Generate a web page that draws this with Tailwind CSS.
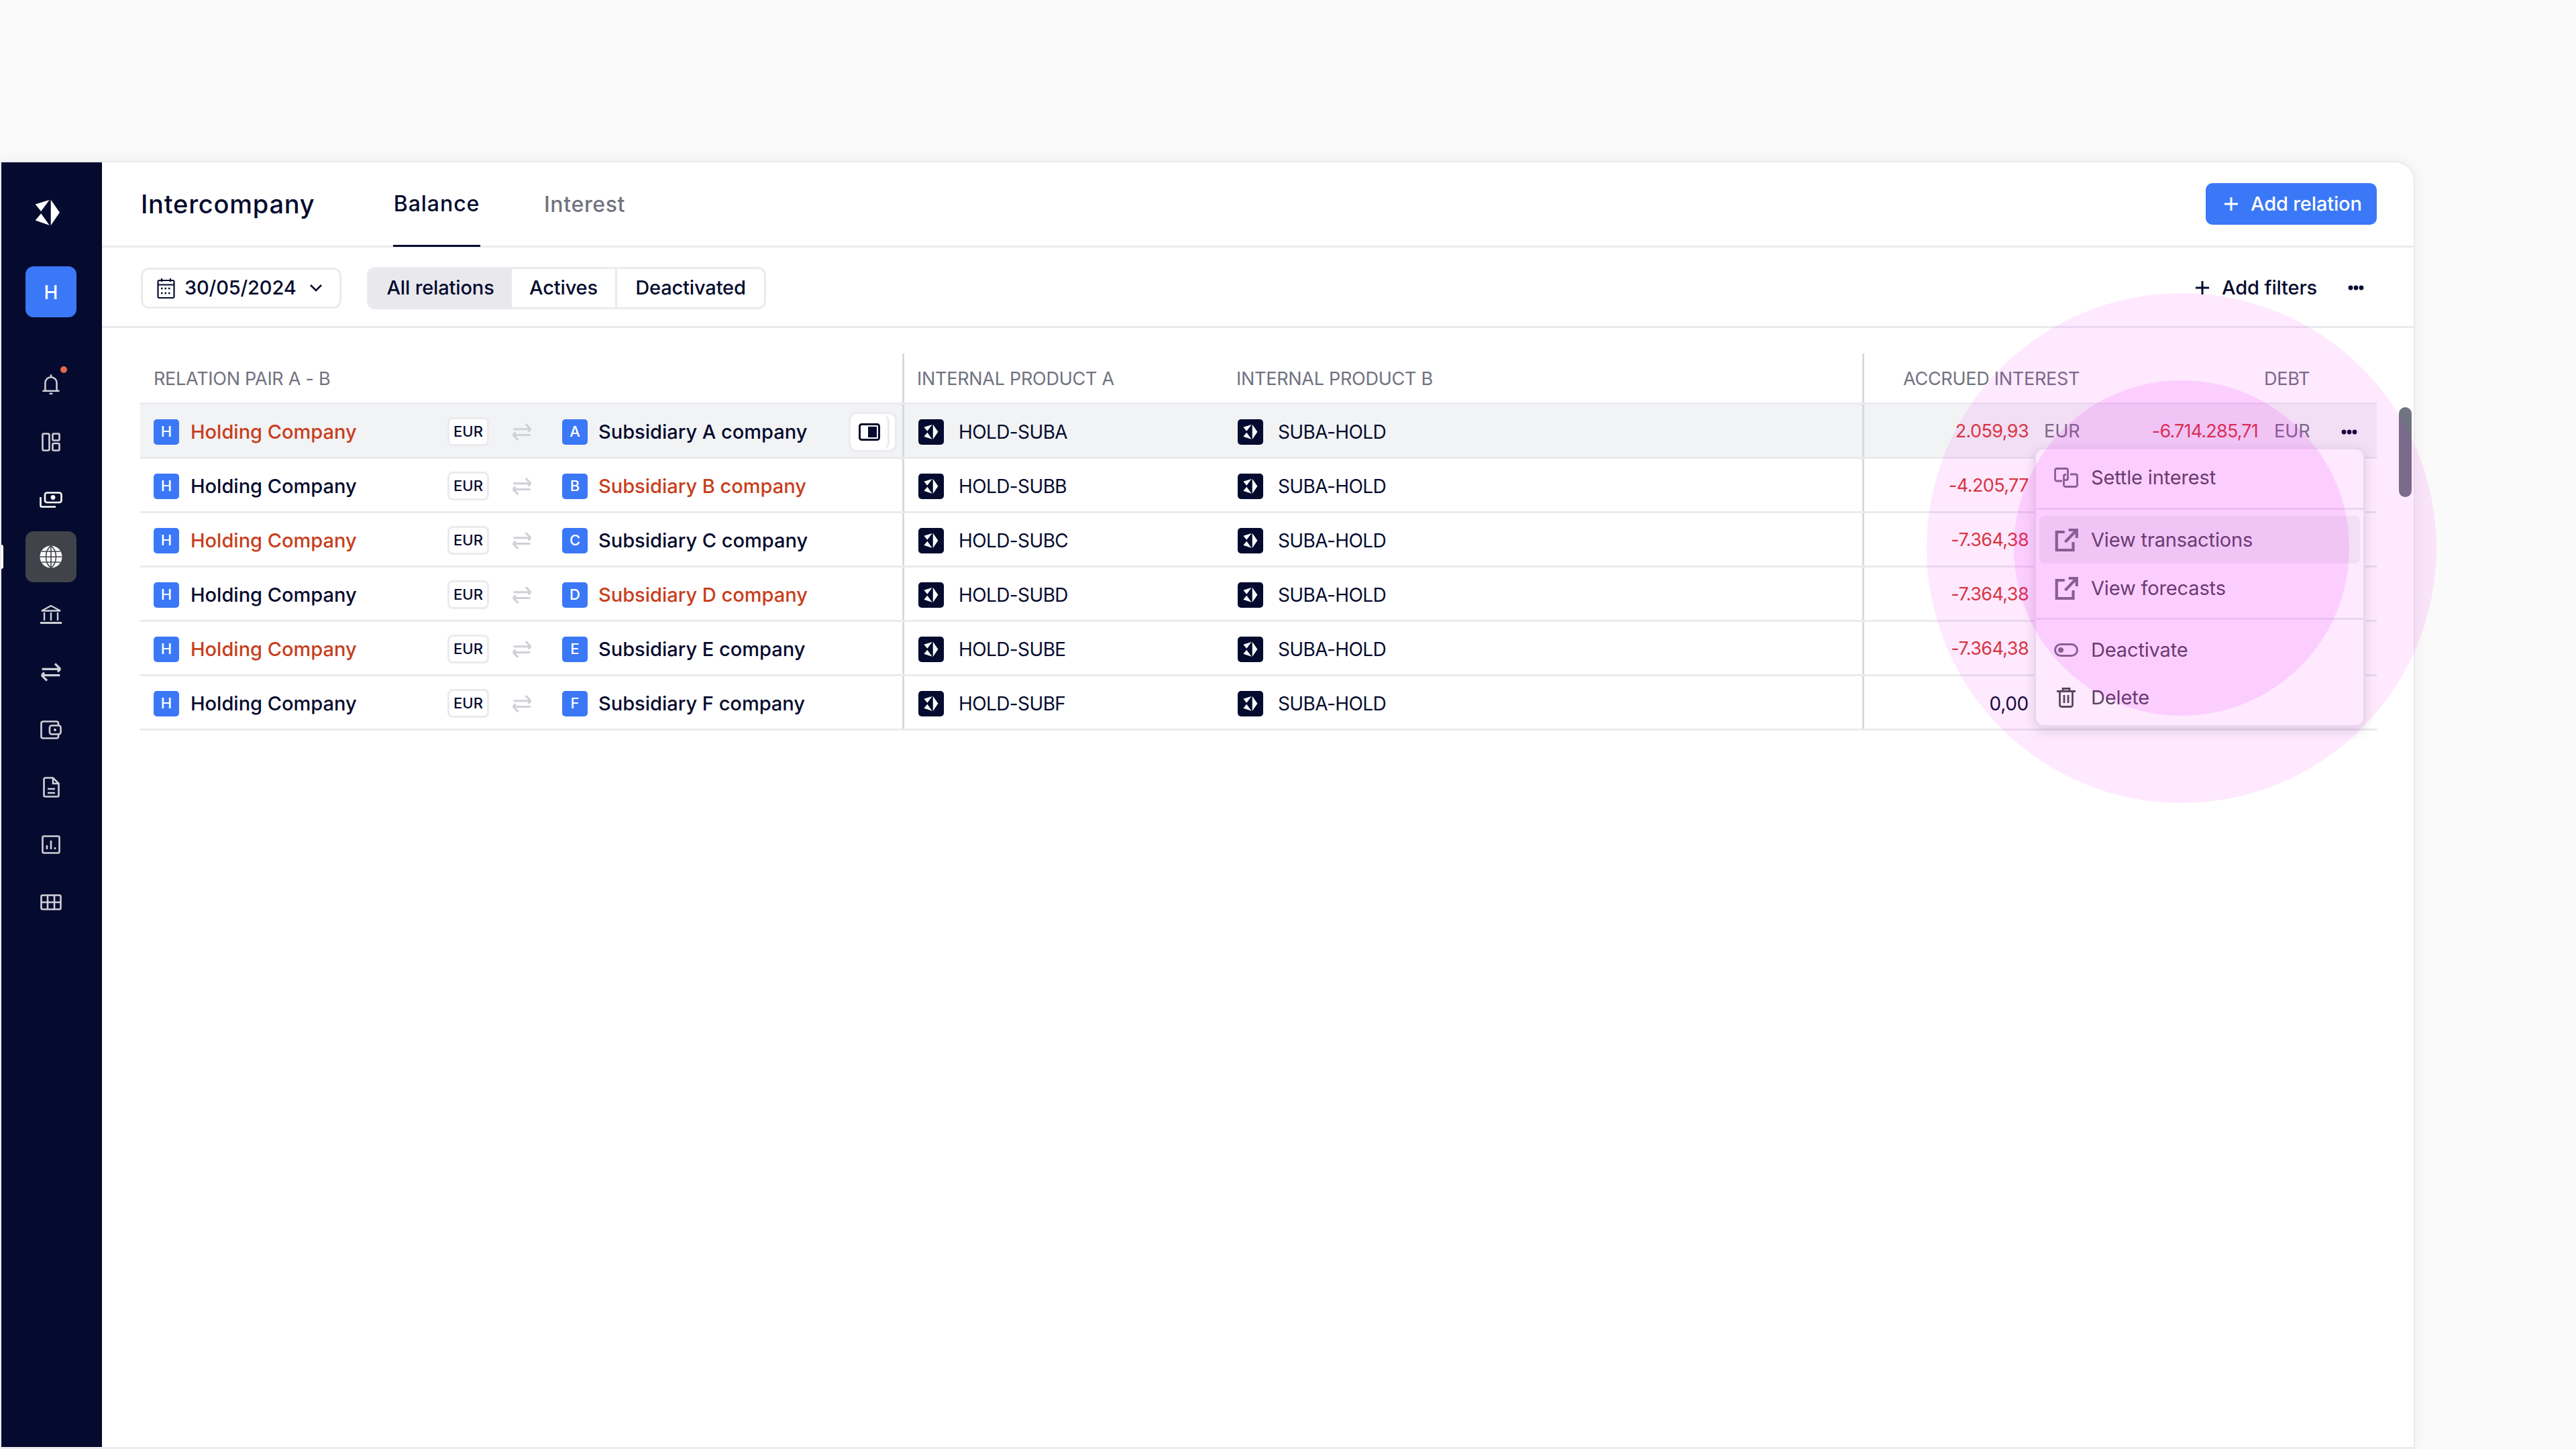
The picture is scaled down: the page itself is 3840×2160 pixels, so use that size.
<!DOCTYPE html>
<html lang="en">
<head>
<meta charset="UTF-8">
<title>Intercompany</title>
<script src="https://cdn.jsdelivr.net/npm/@tailwindcss/browser@4"></script>
</head>
<body>
<svg class="hidden" width="0" height="0">
  <symbol id="logo" viewBox="36 20 112 118"><path fill="currentColor" d="M106 22 145 78 106 135ZM38 42 100 23 63 73ZM38 113 63 83 100 134Z"/></symbol>
  <symbol id="swap" viewBox="0 0 24 24"><path fill="none" stroke="currentColor" stroke-width="2.400" d="M2 8.500h20M22.500 8.500 16.500 2.500M22.500 8.500l-3 3M2 15.500h20M1.500 15.500l6 6M1.500 15.500l3-3"/></symbol>
  <symbol id="dots" viewBox="0 0 24 8"><circle cx="4" cy="4" r="3.400" fill="currentColor"/><circle cx="12" cy="4" r="3.400" fill="currentColor"/><circle cx="20" cy="4" r="3.400" fill="currentColor"/></symbol>
  <symbol id="plus" viewBox="0 0 24 24"><path fill="none" stroke="currentColor" stroke-width="3" d="M12 2v20M2 12h20"/></symbol>
  <symbol id="ext" viewBox="0 0 24 24"><path fill="none" stroke="currentColor" stroke-width="2.800" d="M10.500 4H2.500v18h16.500v-8M11 14 22 2.500M14.500 2h8v8"/></symbol>
</svg>

<div class="relative w-[3840px] h-[2160px] overflow-hidden bg-[#fafafa] pt-[240px] [font-family:Inter,sans-serif] text-[#050b2e]">
  <!-- app window -->
  <div class="relative flex w-[3600px] h-[1920px] overflow-hidden rounded-tr-[30px] border-x-2 border-t-2 border-b-[3px] border-[#ebebef] bg-white shadow-[0_0_24px_rgba(0,0,0,0.06)]">

    <!-- sidebar -->
    <aside class="relative w-[150px] shrink-0 bg-[#050b2e] pl-[36px] pt-[55px]">
      <svg class="ml-[14px] w-[38px] h-[40px] text-white"><use href="#logo"/></svg>
      <div class="mt-[60px] flex w-[76px] h-[76px] items-center justify-center rounded-xl bg-[#3b78f7] pt-[2px] text-[28px] font-medium text-white">H</div>
      <nav class="mt-[62px] flex flex-col gap-[9.8px] text-[#cfd0d8]">
        <div class="relative flex w-[76px] h-[76px] items-center justify-center">
          <svg class="w-[28px] h-[32px]" viewBox="0 0 24 28" fill="none" stroke="currentColor" stroke-width="2.200"><path d="M12 1v3M4.500 22V12a7.500 7.500 0 0 1 15 0v10M1 22.500h22M10 26h4"/></svg>
          <span class="absolute right-[14px] top-[11px] w-[10px] h-[10px] rounded-full bg-[#e5694d]"></span>
        </div>
        <div class="flex w-[76px] h-[76px] items-center justify-center">
          <svg class="w-[28px] h-[28px]" viewBox="0 0 28 28" fill="none" stroke="currentColor" stroke-width="2.600"><rect x="1.500" y="1.500" width="10" height="25" rx="2"/><rect x="16.500" y="1.500" width="10" height="10" rx="1.500"/><rect x="16.500" y="16" width="10" height="10.500" rx="1.500"/></svg>
        </div>
        <div class="flex w-[76px] h-[76px] items-center justify-center text-white">
          <svg class="w-[34px] h-[24px]" viewBox="0 0 34 24" fill="none" stroke="currentColor" stroke-width="2.600"><rect x="8" y="1.500" width="24.500" height="14.500" rx="3"/><path d="M1.500 8v12.500a2 2 0 0 0 2 2H24"/><circle cx="20" cy="8.500" r="3.400" fill="currentColor" stroke="none"/></svg>
        </div>
        <div class="flex w-[76px] h-[76px] items-center justify-center rounded-xl bg-[#404349]">
          <svg class="w-[34px] h-[34px]" viewBox="0 0 34 34"><circle cx="17" cy="17" r="16.500" fill="#fff"/><path fill="none" stroke="#404349" stroke-width="1.600" d="M17 .5v33M.5 17h33M3 9h28M3 25h28M17 .5C7 8 7 26 17 33.500M17 .5c10 7.500 10 25.500 0 33"/></svg>
        </div>
        <div class="flex w-[76px] h-[76px] items-center justify-center">
          <svg class="w-[32px] h-[30px]" viewBox="0 0 32 30" fill="none" stroke="currentColor" stroke-width="2.400"><path d="M2 9.500 16 2l14 7.500ZM6 12v12M16 12v12M26 12v12"/><path d="M0 27.500h32" stroke-width="3"/></svg>
        </div>
        <div class="flex w-[76px] h-[76px] items-center justify-center">
          <svg class="w-[32px] h-[32px]"><use href="#swap"/></svg>
        </div>
        <div class="flex w-[76px] h-[76px] items-center justify-center">
          <svg class="w-[32px] h-[28px]" viewBox="0 0 32 28" fill="none" stroke="currentColor" stroke-width="2.600"><path d="M27 7V4a2.500 2.500 0 0 0-2.500-2.500H4A2.500 2.500 0 0 0 1.500 4v20A2.500 2.500 0 0 0 4 26.500h20.500A2.500 2.500 0 0 0 27 24v-3"/><rect x="14" y="7.500" width="16.500" height="13" rx="3"/><circle cx="22" cy="14" r="2" fill="currentColor" stroke="none"/></svg>
        </div>
        <div class="flex w-[76px] h-[76px] items-center justify-center">
          <svg class="w-[25px] h-[31px]" viewBox="0 0 25 31" fill="none" stroke="currentColor" stroke-width="2.600"><path d="M3.500 1.500H15L23.500 10v17.500a2 2 0 0 1-2 2h-18a2 2 0 0 1-2-2v-24a2 2 0 0 1 2-2ZM15 1.500V10h8.500M7 18h11M7 24h11"/></svg>
        </div>
        <div class="flex w-[76px] h-[76px] items-center justify-center">
          <svg class="w-[28px] h-[28px]" viewBox="0 0 28 28" fill="none" stroke="currentColor" stroke-width="2.600"><rect x="1.500" y="1.500" width="25" height="25" rx="2"/><path d="M8 21v-6M14 21V8M20 21v-3"/></svg>
        </div>
        <div class="flex w-[76px] h-[76px] items-center justify-center">
          <svg class="w-[32px] h-[24px]" viewBox="0 0 32 24" fill="none" stroke="currentColor" stroke-width="2.600"><rect x="1.500" y="1.500" width="29" height="21" rx="2"/><path d="M1.500 12h29M11 1.500v21M21 1.500v21"/></svg>
        </div>
      </nav>
    </aside>
    <span class="absolute left-0 top-[570px] w-[3px] h-[36px] rounded-r-sm bg-white"></span>

    <!-- main -->
    <main class="flex-1 min-w-0">
      <header class="flex h-[127px] items-center border-b-[3px] border-[#ebebef] pl-[58px] pr-[55px]">
        <h1 class="w-[376px] text-[38px] font-medium tracking-[0.02em]">Intercompany</h1>
        <div class="flex h-full items-center">
          <span class="flex h-[127px] w-[130px] items-center justify-center border-b-[3px] border-[#050b2e] pt-[2px] text-[32px] font-medium tracking-[0.03em]">Balance</span>
          <span class="ml-[95px] pt-[2px] text-[32px] font-medium tracking-[0.02em] text-[#71727f]">Interest</span>
        </div>
        <button class="ml-auto flex h-[62px] w-[255px] items-center rounded-[10px] bg-[#3b78f7] pl-[26px] text-[29px] font-medium tracking-[-0.005em] text-white">
          <svg class="mr-[17px] w-[24px] h-[24px]"><use href="#plus"/></svg>Add relation
        </button>
      </header>

      <div class="flex h-[120px] items-center border-b-[3px] border-[#ebebef] pl-[58px] pr-[74px] pt-[3px] text-[29px] font-medium tracking-[-0.005em]">
        <button class="flex h-[61px] w-[299px] items-center rounded-xl border-[3px] border-[#ebebef] pl-[21px]">
          <svg class="mr-[14px] w-[27px] h-[31px]" viewBox="0 0 27 31" fill="none" stroke="currentColor" stroke-width="2.200"><path d="M7 1v5M20 1v5M2 10.500h23"/><rect x="1.500" y="4" width="24" height="26" rx="2"/><path stroke-dasharray="2.500 3" d="M6 16h16M6 23h16" stroke-width="2.500"/></svg>
          30/05/2024
          <svg class="ml-[19px] w-[20px] h-[12px]" viewBox="0 0 20 12" fill="none" stroke="currentColor" stroke-width="2.500"><path d="m2 2 8 8 8-8"/></svg>
        </button>
        <div class="ml-[38px] flex h-[63px] w-[595px] overflow-hidden rounded-xl border-[3px] border-[#ebebef]">
          <span class="flex w-[213px] items-center justify-center bg-[#e9e9ed]">All relations</span>
          <span class="flex w-[157px] items-center justify-center border-r-[3px] border-[#ebebef]">Actives</span>
          <span class="flex flex-1 items-center justify-center">Deactivated</span>
        </div>
        <button class="ml-auto flex items-center">
          <svg class="mr-[17px] w-[24px] h-[24px]"><use href="#plus"/></svg>Add filters
        </button>
        <svg class="ml-[46px] w-[24px] h-[8px]"><use href="#dots"/></svg>
      </div>

      <!-- table -->
      <section class="ml-[57px] mt-[38px] w-[3334px] text-[29px] font-medium">
        <div class="flex h-[76px] border-b-[3px] border-[#ebebef] text-[27px] font-normal tracking-[-0.01em] whitespace-nowrap text-[#71727f]">
          <div class="flex w-[1139px] items-center border-r-[3px] border-[#d8d8de] pl-[20px] pt-[4px]">RELATION PAIR A - B</div>
          <div class="flex w-[1431px] items-center border-r-[3px] border-[#d8d8de] pl-[19px] pt-[4px]"><span class="w-[476px]">INTERNAL PRODUCT A</span><span>INTERNAL PRODUCT B</span></div>
          <div class="flex flex-1 items-center pt-[4px]"><span class="w-[321px] pl-[58px]">ACCRUED INTEREST</span><span class="ml-[275px]">DEBT</span></div>
        </div>
        <div id="rows"></div>
      </section>
    </main>

    <!-- scrollbar thumb -->
    <span class="absolute right-[3px] top-[365px] w-[19px] h-[134px] rounded-full bg-[#6f7480]"></span>
  </div>

  <!-- row action menu -->
  <div class="absolute left-[3032px] top-[667px] w-[494px] h-[417px] rounded-[14px] border-[3px] border-[#ebebef] bg-white text-[29px] text-[#4b4b51] tracking-[-0.005em] shadow-[0_6px_18px_rgba(0,0,0,0.12)]">
    <div class="flex h-[90px] items-center border-b-[3px] border-[#ebebef] pb-[3px] pl-[27px]">
      <svg class="mr-[19px] w-[36px] h-[30px] text-[#72757d]" viewBox="0 0 36 30" fill="none" stroke="currentColor" stroke-width="2.800"><path d="M12 20H4a2.500 2.500 0 0 1-2.500-2.500V4A2.500 2.500 0 0 1 4 1.500h14A2.500 2.500 0 0 1 20.500 4v12a2.500 2.500 0 0 1-2.500 2.500h-2"/><path d="M24 10h8a2.500 2.500 0 0 1 2.500 2.500V26a2.500 2.500 0 0 1-2.500 2.500H17a2.500 2.500 0 0 1-2.500-2.500V13a2.500 2.500 0 0 1 2.500-2.500h1"/></svg>
      Settle interest
    </div>
    <div class="flex h-[164px] flex-col border-b-[3px] border-[#ebebef] px-[5px] pt-[9px]">
      <div class="flex h-[71px] items-center rounded-lg bg-[#f2f3f5] pl-[22px]">
        <svg class="mr-[19px] w-[36px] h-[36px] text-[#72757d]"><use href="#ext"/></svg>View transactions
      </div>
      <div class="flex h-[71px] items-center pl-[22px] pt-[3px]">
        <svg class="mr-[19px] w-[36px] h-[36px] text-[#72757d]"><use href="#ext"/></svg>View forecasts
      </div>
    </div>
    <div class="flex h-[86px] items-center pl-[27px] pt-[3px]">
      <svg class="mr-[19px] w-[36px] h-[20px] text-[#72757d]" viewBox="0 0 36 20"><rect x="1.500" y="1.500" width="33" height="17" rx="8.500" fill="none" stroke="currentColor" stroke-width="3"/><circle cx="10" cy="10" r="4" fill="currentColor"/></svg>
      Deactivate
    </div>
    <div class="flex h-[60px] items-center pl-[31px]">
      <svg class="mr-[23px] w-[28px] h-[30px] text-[#4b4b51]" viewBox="0 0 28 30" fill="none" stroke="currentColor" stroke-width="2.800"><path d="M0 5.500h28M9 5V1.500h10V5M4.500 6v20a2.500 2.500 0 0 0 2.500 2.500h14a2.500 2.500 0 0 0 2.500-2.500V6M11 11v12M17 11v12"/></svg>
      Delete
    </div>
  </div>

  <!-- highlight circles -->
  <span class="pointer-events-none absolute left-[2872px] top-[437px] w-[760px] h-[760px] rounded-full bg-[#f000ff]/[0.086]"></span>
  <span class="pointer-events-none absolute left-[3002px] top-[567px] w-[500px] h-[500px] rounded-full bg-[#f000ff]/[0.112]"></span>
</div>

<script>
  const RED = "text-[#c83e1c]";
  const data = [
    { sub: "A", holdRed: true, value: "2.059,93" },
    { sub: "B", holdRed: false, value: "-4.205,77" },
    { sub: "C", holdRed: true, value: "-7.364,38" },
    { sub: "D", holdRed: false, value: "-7.364,38" },
    { sub: "E", holdRed: true, value: "-7.364,38" },
    { sub: "F", holdRed: false, value: "0,00" },
  ];

  const productIcon = `<span class="flex w-[38px] h-[38px] items-center justify-center rounded-[5px] bg-[#050b2e] text-white"><svg class="w-[22px] h-[24px]"><use href="#logo"/></svg></span>`;

  document.querySelector("#rows").innerHTML = data.map((r, i) => {
    const subRed = !r.holdRed && r.sub !== "F";
    const zero = r.value === "0,00";
    return `
    <div class="flex h-[81px] border-b-[3px] border-[#ebebef] ${i === 0 ? "bg-[#f2f3f5]" : ""}">
      <div class="flex w-[1139px] items-center border-r-[3px] border-[#d8d8de] pl-[20px] pt-[3px]">
        <span class="flex w-[38px] h-[38px] items-center justify-center rounded-[5px] bg-[#3b78f7] text-[22px] text-white">H</span>
        <span class="ml-[17px] w-[383px] ${r.holdRed ? RED : ""}">Holding Company</span>
        <span class="flex w-[62px] h-[43px] items-center justify-center rounded-lg border-[3px] border-[#ebebef] bg-white text-[22px]">EUR</span>
        <svg class="ml-[34px] w-[30px] h-[30px] text-[#d0d0d8]"><use href="#swap"/></svg>
        <span class="ml-[45px] flex w-[38px] h-[38px] items-center justify-center rounded-[5px] bg-[#3b78f7] text-[22px] text-white">${r.sub}</span>
        <span class="ml-[16px] ${subRed ? RED : ""}">Subsidiary ${r.sub} company</span>
        ${i === 0 ? `<span class="ml-auto mr-[8px] flex w-[72px] h-[60px] rounded-xl border-[3px] border-[#ebebef] bg-white"><span class="flex w-[58px] items-center justify-center rounded-xl border-r-[3px] border-[#ebebef]"><svg class="w-[32px] h-[26px]" viewBox="0 0 32 26"><rect x="1.500" y="1.500" width="29" height="23" rx="3" fill="none" stroke="currentColor" stroke-width="3"/><rect x="14" y="5" width="13" height="16" fill="currentColor"/></svg></span></span>` : ""}
      </div>
      <div class="flex w-[1431px] items-center border-r-[3px] border-[#d8d8de] pl-[21px] pt-[3px] text-[28px] font-normal tracking-[-0.022em]">
        <div class="flex w-[476px] items-center">${productIcon}<span class="ml-[22px]">HOLD-SUB${r.sub}</span></div>
        <div class="flex items-center">${productIcon}<span class="ml-[22px]">SUBA-HOLD</span></div>
      </div>
      <div class="flex flex-1 items-center pt-[3px] text-[27px] font-normal">
        <span class="w-[245px] text-right ${zero ? "text-[28px] tracking-[-0.01em]" : "tracking-[-0.022em] text-[#d63a2f]"}">${r.value}</span>
        ${i === 0 ? `<span class="w-[77px] pl-[23px] text-[#71727f]">EUR</span>
        <span class="w-[265px] text-right tracking-[-0.03em] text-[#d63a2f]">-6.714.285,71</span><span class="w-[76px] pl-[24px] text-[#71727f]">EUR</span>
        <svg class="ml-[48px] w-[24px] h-[8px]"><use href="#dots"/></svg>` : ""}
      </div>
    </div>`;
  }).join("");
</script>
</body>
</html>
